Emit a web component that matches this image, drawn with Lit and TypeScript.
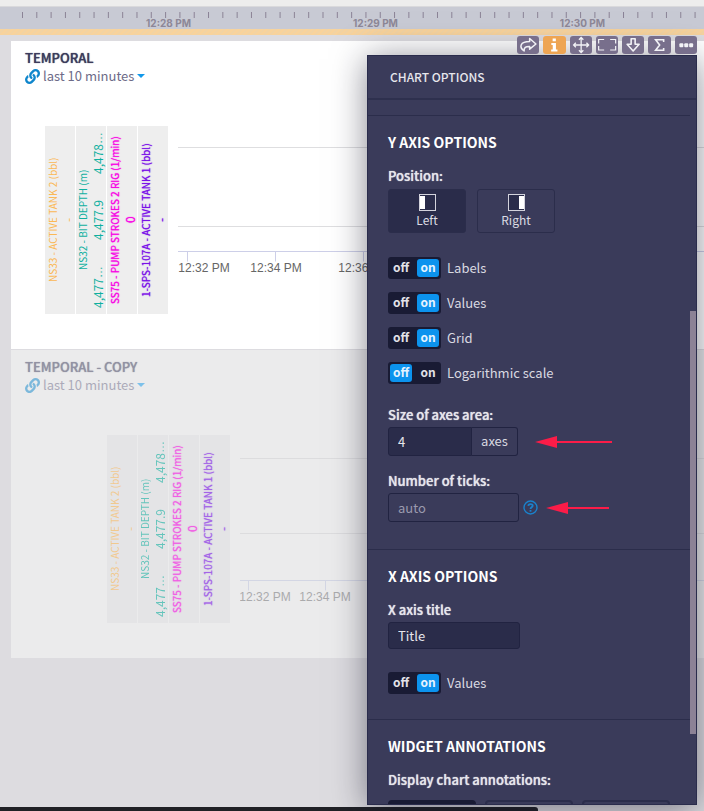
import { LitElement, html, svg, css } from "lit";
import { customElement } from "lit/decorators.js";
import { classMap } from "lit/directives/class-map.js";

const sans = css`"Noto Sans CJK JP", "Noto Sans", sans-serif`;

@customElement("time-ruler")
class TimeRuler extends LitElement {
  static styles = css`
    :host { display: block; font-family: Inter, sans-serif; }
    .ruler { background: #c8cad4; border-top: 1px solid #d9d9dc; height: 22px; overflow: hidden; }
    .ticks { display: block; width: 100%; height: 11px; }
    .ticks line { stroke: #8b8396; stroke-width: 1; }
    .labels { display: grid; grid-template-columns: repeat(3, 207px); padding-left: 65px; }
    .labels span { font-size: 10px; line-height: 10px; font-weight: 700; color: #8d8797; text-align: center; }
    .band { height: 6px; background: repeating-linear-gradient(135deg, #f9d39b 0 2px, #f3d3a2 2px 4px); }
  `;
  render() {
    const marks = Array.from({ length: 90 }, (_, i) => 22.5 + i * 14.31);
    return html`
      <div class="ruler">
        <svg class="ticks" aria-hidden="true">
          ${marks.map((x) => svg`<line x1=${x} x2=${x} y1="5" y2="11"></line>`)}
        </svg>
        <div class="labels"><span>12:28 PM</span><span>12:29 PM</span><span>12:30 PM</span></div>
      </div>
      <div class="band"></div>`;
  }
}

interface Axis { name: string; values: string[]; tone: string; strong?: boolean; }
const axes: Axis[] = [
  { name: "NS33 - ACTIVE TANK 2 (bbl)", values: ["-"], tone: "amber" },
  { name: "NS32 - BIT DEPTH (m)", values: ["4,477…", "4,477.9", "4,478…"], tone: "teal" },
  { name: "SS75 - PUMP STROKES 2 RIG (1/min)", values: ["0"], tone: "pink", strong: true },
  { name: "1-SPS-107A - ACTIVE TANK 1 (bbl)", values: ["-"], tone: "violet", strong: true },
];

interface Plot { grid: number[]; base: number; ticks: { x: number; label: number; text: string }[]; }

@customElement("trend-widget")
class TrendWidget extends LitElement {
  static properties = { heading: {}, plot: { attribute: false }, faded: { type: Boolean, reflect: true } };
  declare heading: string;
  declare plot: Plot;
  declare faded: boolean;
  static styles = css`
    :host { display: block; box-sizing: border-box; height: 308px; padding: 8px 0 0 14px; background: #fff; color: #3c3c5c; font-family: ${sans}; overflow: hidden; }
    :host([faded]) { background: #ebebec; }
    :host([faded]) .head { opacity: 0.5; }
    :host([faded]) .name, :host([faded]) .values { opacity: 0.6; }
    :host([faded]) .axis { background: #e4e4e6; }
    :host([faded]) .grid { stroke: #dcdcde; }
    :host([faded]) .base { stroke: #d3d6e4; }
    :host([faded]) text { fill: #aaaaac; }
    h2 { margin: 0; font-size: 13px; line-height: 18px; font-weight: 500; }
    .head h2 { text-shadow: 0 0 1px currentColor; }
    .range { display: flex; align-items: center; height: 18px; padding: 0; border: 0; background: none; font: 13px/18px ${sans}; color: #6d6b88; }
    .link { width: 15px; height: 15px; margin-right: 3px; }
    .caret { margin-left: 3px; border: 4px solid transparent; border-top-color: #1198ea; border-bottom: 0; }
    .chart { display: flex; gap: 10px; margin: 41px 0 0 20px; }
    .chart.shifted { margin-left: 82px; }
    .axes { display: flex; gap: 1px; flex: none; height: 188px; }
    .axis { display: flex; justify-content: center; box-sizing: border-box; width: 30px; padding: 6px 0; background: #eee; writing-mode: vertical-rl; transform: rotate(180deg); }
    .col { display: flex; flex-direction: column-reverse; width: 30px; height: 176px; }
    .name { font-size: 10px; line-height: 15px; text-align: center; white-space: nowrap; }
    .values { display: flex; justify-content: center; font-size: 12px; line-height: 15px; }
    .many { justify-content: space-between; }
    .dots { font-family: "Liberation Sans", sans-serif; }
    .amber { color: #fbb855; }
    .teal { color: #10b0a0; }
    .pink { color: #f808e4; }
    .violet { color: #7a10e8; }
    .strong { text-shadow: 0 0 1px currentColor; }
    .plot { flex: 1; min-width: 0; height: 188px; }
    .grid { stroke: #dedee0; }
    .base { stroke: #cdcfe8; }
    .plot text { font: 12px "Liberation Sans", sans-serif; fill: #666; text-anchor: middle; }
  `;
  private value(v: string) {
    return v.endsWith("…") ? html`<span>${v.slice(0, -1)}<span class="dots">…</span></span>` : html`<span>${v}</span>`;
  }
  render() {
    const p = this.plot;
    return html`
      <div class="head">
        <h2>${this.heading}</h2>
        <button class="range">
          <svg class="link" viewBox="0 0 512 512" aria-hidden="true"><path fill="#0f86cc" d="M326.612 185.391c59.747 59.809 58.927 155.698.36 214.59-.11.12-.24.25-.36.37l-67.2 67.2c-59.27 59.27-155.699 59.262-214.96 0-59.27-59.26-59.27-155.7 0-214.96l37.106-37.106c9.84-9.84 26.786-3.3 27.294 10.606.648 17.722 3.826 35.527 9.69 52.721 1.986 5.822.567 12.262-3.783 16.612l-13.087 13.087c-28.026 28.026-28.905 73.66-1.155 101.96 28.024 28.579 74.086 28.749 102.325.51l67.2-67.19c28.191-28.191 28.073-73.757 0-101.83-3.701-3.694-7.429-6.564-10.341-8.569a16.037 16.037 0 0 1-6.947-12.606c-.396-10.567 3.348-21.456 11.698-29.806l21.054-21.055c5.521-5.521 14.182-6.199 20.584-1.731a152.482 152.482 0 0 1 20.522 17.197zM467.547 44.449c-59.261-59.262-155.69-59.27-214.96 0l-67.2 67.2c-.12.12-.25.25-.36.37-58.566 58.892-59.387 154.781.36 214.59a152.454 152.454 0 0 0 20.521 17.196c6.402 4.468 15.064 3.789 20.584-1.731l21.054-21.055c8.35-8.35 12.094-19.239 11.698-29.806a16.037 16.037 0 0 0-6.947-12.606c-2.912-2.005-6.64-4.875-10.341-8.569-28.073-28.073-28.191-73.639 0-101.83l67.2-67.19c28.239-28.239 74.3-28.069 102.325.51 27.75 28.3 26.872 73.934-1.155 101.96l-13.087 13.087c-4.35 4.35-5.769 10.79-3.783 16.612 5.864 17.194 9.042 34.999 9.69 52.721.509 13.906 17.454 20.446 27.294 10.606l37.106-37.106c59.271-59.259 59.271-155.699.001-214.959z"/></svg>
          last 10 minutes<span class="caret"></span>
        </button>
      </div>
      <div class=${classMap({ chart: true, shifted: this.faded })}>
        <div class="axes">
          ${axes.map((a) => html`<div class="axis ${a.tone} ${a.strong ? "strong" : ""}">
            <div class="col">
              <div class=${classMap({ values: true, many: a.values.length > 1 })}>${a.values.map((v) => this.value(v))}</div>
              <div class="name">${a.name}</div>
            </div>
          </div>`)}
        </div>
        <svg class="plot">
          ${p.grid.map((y) => svg`<line class="grid" x1="0" x2="100%" y1=${y} y2=${y}></line>`)}
          <line class="base" x1="0" x2="100%" y1=${p.base} y2=${p.base}></line>
          ${p.ticks.map((t) => svg`<line class="base" x1=${t.x} x2=${t.x} y1=${p.base} y2=${p.base + 10}></line>
            <text x=${t.label} y=${p.base + 20}>${t.text}</text>`)}
        </svg>
      </div>`;
  }
}

@customElement("option-switch")
class OptionSwitch extends LitElement {
  static properties = { label: {}, on: { type: Boolean } };
  declare label: string;
  declare on: boolean;
  static styles = css`
    :host { display: block; }
    label { display: flex; align-items: center; gap: 6px; height: 22px; font: 13px/20px ${sans}; color: #d9d9e1; }
    input { position: absolute; opacity: 0; width: 53px; height: 22px; margin: 0; }
    .track { display: grid; grid-template-columns: 22px 22px; gap: 5px; box-sizing: border-box; width: 53px; height: 22px; padding: 2px; border-radius: 3px; background: #191b34; font-size: 12px; font-weight: 700; line-height: 16px; text-align: center; color: #e2e2e8; }
    .track span { border-radius: 3px; height: 18px; }
    .track .lit { background: #0c93ee; color: #e4f3ff; }
  `;
  render() {
    return html`<label>
      <input type="checkbox" role="switch" .checked=${this.on} @change=${(e: Event) => (this.on = (e.target as HTMLInputElement).checked)} />
      <span class="track" aria-hidden="true"><span class=${this.on ? "" : "lit"}>off</span><span class=${this.on ? "lit" : ""}>on</span></span>
      ${this.label}
    </label>`;
  }
}

@customElement("chart-options")
class ChartOptions extends LitElement {
  static properties = { side: { state: true } };
  declare side: string;
  constructor() { super(); this.side = "Left"; }
  static styles = css`
    :host { display: flex; flex-direction: column; box-sizing: border-box; border: 1px solid #2a2c4c; background: #3a3b5a; color: #e6e6ec; font: 13px/20px ${sans}; box-shadow: 0 4px 32px rgba(20, 20, 40, 0.5); overflow: hidden; }
    h2 { margin: 0; padding: 0 22px; font-size: 12px; line-height: 42px; font-weight: 500; border-bottom: 2px solid #2e304e; }
    .body { position: relative; flex: 1; min-height: 0; overflow: hidden; padding-top: 15px; }
    .thumb { position: absolute; right: 0; top: 30%; height: 60%; width: 6px; background: #8c8296; }
    section { border-top: 1px solid #2b2d4b; margin-right: 6px; padding: 16px 20px 25px; }
    h3 { margin: 0 0 14px; font-size: 14px; line-height: 20px; font-weight: 700; color: #fff; }
    .caption { display: block; font-weight: 500; text-shadow: 0 0 1px currentColor; }
    .choices { display: flex; gap: 11px; margin: 3px 0 24px; }
    .choice { display: flex; flex-direction: column; align-items: center; box-sizing: border-box; width: 78px; height: 44px; padding: 4px 0 0; border: 1px solid #2b2d4b; border-radius: 3px; background: none; color: #dcdce4; font: 12px/18px ${sans}; }
    .picked { background: #2a2c4a; }
    .choice svg { width: 17px; height: 17px; }
    .switches { display: flex; flex-direction: column; gap: 13px; margin-bottom: 21px; }
    .row { display: flex; align-items: center; margin: 2px 0 15px; }
    .last { margin-bottom: 2px; }
    .field { display: block; box-sizing: border-box; width: 131px; height: 29px; padding: 0 9px; border: 1px solid #212341; border-radius: 3px; background: #2a2c4a; color: #e6e6ec; font: 13px/20px ${sans}; }
    .plain { background: #3a3b5a; }
    .plain::placeholder { color: #9a9aae; opacity: 1; }
    .wide { width: 132px; height: 27px; margin: 2px 0 23px; }
    .joined { width: 84px; border-radius: 3px 0 0 3px; }
    .unit { box-sizing: border-box; width: 46px; height: 29px; border: 1px solid #212341; border-left: 0; border-radius: 0 3px 3px 0; line-height: 26px; text-align: center; color: #d9d9e1; }
    .help { display: block; width: 15px; height: 15px; margin-left: 4px; padding: 0; border: 0; background: none; }
    .help svg { display: block; width: 15px; height: 15px; }
    .arrow { display: block; height: 12px; margin-left: 17px; }
    .near { margin-left: 8px; }
    .notes { display: grid; grid-template-columns: repeat(3, 88px); gap: 9px; margin-top: 10px; }
    .note { height: 44px; border: 2px solid #2b2d4b; border-radius: 4px; background: none; }
    .noted { background: #191b34; border-color: #191b34; }
  `;
  private arrow(len: number, cls: string) {
    return html`<svg class="arrow ${cls}" width=${len} height="12" aria-hidden="true">
      <path fill="#fb1c48" d="M0 6 22 0V5H${len}V7H22V12Z"/></svg>`;
  }
  private choice(name: string, x: number) {
    return html`<button class=${classMap({ choice: true, picked: this.side === name })} aria-pressed=${this.side === name} @click=${() => (this.side = name)}>
      <svg viewBox="0 0 17 17" aria-hidden="true"><rect x="0.5" y="0.5" width="16" height="16" fill="#2a2c4a" stroke="#d3d3dc"/><rect x=${x} y="2" width="5" height="13" fill="#fff"/></svg>${name}</button>`;
  }
  render() {
    return html`
      <h2>CHART OPTIONS</h2>
      <div class="body">
        <section>
          <h3>Y AXIS OPTIONS</h3>
          <span class="caption">Position:</span>
          <div class="choices">${this.choice("Left", 1)}${this.choice("Right", 11)}</div>
          <div class="switches">
            <option-switch label="Labels" on></option-switch>
            <option-switch label="Values" on></option-switch>
            <option-switch label="Grid" on></option-switch>
            <option-switch label="Logarithmic scale"></option-switch>
          </div>
          <label class="caption" for="size">Size of axes area:</label>
          <div class="row"><input class="field joined" id="size" value="4" /><span class="unit">axes</span>${this.arrow(77, "")}</div>
          <label class="caption" for="count">Number of ticks:</label>
          <div class="row last"><input class="field plain" id="count" placeholder="auto" />
            <button class="help" aria-label="Help"><svg viewBox="0 0 15 15"><circle cx="7.5" cy="7.5" r="6.5" fill="none" stroke="#1a82cc" stroke-width="1.4"/><path d="M5.3 5.9C5.4 3.4 9.7 3.5 9.7 5.7 9.7 7.2 7.5 7.3 7.5 8.9" fill="none" stroke="#1a82cc" stroke-width="1.8"/><rect x="6.6" y="10" width="1.8" height="1.700" fill="#1a82cc"/></svg></button>
            ${this.arrow(63, "near")}</div>
        </section>
        <section>
          <h3>X AXIS OPTIONS</h3>
          <label class="caption" for="title">X axis title</label>
          <input class="field wide" id="title" value="Title" />
          <option-switch label="Values" on></option-switch>
        </section>
        <section>
          <h3>WIDGET ANNOTATIONS</h3>
          <span class="caption">Display chart annotations:</span>
          <div class="notes"><button class="note noted" aria-label="First display mode"></button><button class="note" aria-label="Second display mode"></button><button class="note" aria-label="Third display mode"></button></div>
        </section>
        <div class="thumb"></div>
      </div>`;
  }
}

const toolIcons = [
  { name: "Share", icon: svg`<path d="M12.5 2.5 18.8 8l-6.300 5.200V10.500C8.500 10.400 6.600 11.500 7 15 1.500 11 3 5.500 12.500 5.500Z" fill="none" stroke="#f2f2f6" stroke-width="1.500" stroke-linejoin="round"/>` },
  { name: "Information", icon: svg`<path d="M9.5 2.5h3.2v2.8H9.5zM8.2 7h4.600v6.500h1.500V15.500H8v-2h1.600V9H8.200z" fill="#fff"/>` },
  { name: "Move", icon: svg`<path d="M11 1.500v15M3.500 9h15M8.800 3.700 11 1.500l2.200 2.200M8.800 14.300 11 16.500l2.200-2.200M5.700 6.800 3.500 9l2.200 2.200M16.300 6.800 18.500 9l-2.200 2.200" fill="none" stroke="#f2f2f6" stroke-width="1.300"/>` },
  { name: "Full screen", icon: svg`<path d="M8 3.500H2.500v4M2.500 10v4H8M14 3.500h5.500v4M19.500 10v4H14" fill="none" stroke="#f2f2f6" stroke-width="1.200"/>` },
  { name: "Download", icon: svg`<path d="M9 2.800h4v5.500h4L11 15 5 8.300H9Z" fill="none" stroke="#f2f2f6" stroke-width="1.600" stroke-linejoin="round"/>` },
  { name: "Aggregate", icon: svg`<path d="M15.500 6V3.800H7.500L11.500 9 7.500 14.200h8V12" fill="none" stroke="#f2f2f6" stroke-width="1.600"/>` },
  { name: "More", icon: svg`<g fill="#f2f2f6"><rect x="4.200" y="7.200" width="4" height="4" rx="1"/><rect x="9.100" y="7.200" width="4" height="4" rx="1"/><rect x="14" y="7.200" width="4" height="4" rx="1"/></g>` },
];

@customElement("app-root")
class AppRoot extends LitElement {
  static styles = css`
    :host { display: block; position: relative; height: 100vh; min-height: 400px; overflow: hidden; background: #dddce0; font-family: ${sans}; }
    .top { height: 6px; background: #ededed; }
    .widgets { display: flex; flex-direction: column; gap: 1px; padding: 6px 0 0 11px; }
    .tools { position: absolute; top: 36px; right: 7px; width: 180px; display: grid; grid-template-columns: repeat(7, 1fr); gap: 4px; }
    .tool { height: 18px; padding: 0; border: 0; border-radius: 3px; background: #786f8c; }
    .tool svg { display: block; width: 100%; height: 18px; }
    .active { background: #eea553; }
    .panel { position: absolute; top: 55px; right: 7px; bottom: 6px; width: 330px; }
    .status { position: absolute; left: 0; bottom: 0; width: 538px; height: 4px; background: #202126; border-top-right-radius: 3px; }
  `;
  private first: Plot = { grid: [21.5, 100.5], base: 125.5, ticks: [
    { x: 9.5, label: 26, text: "12:32 PM" }, { x: 97.5, label: 98, text: "12:34 PM" }, { x: 185.5, label: 186, text: "12:36 PM" }] };
  private second: Plot = { grid: [23.5, 98.5], base: 145.5, ticks: [
    { x: 8.5, label: 25, text: "12:32 PM" }, { x: 85.5, label: 85, text: "12:34 PM" }] };
  render() {
    return html`
      <div class="top"></div>
      <time-ruler></time-ruler>
      <div class="widgets">
        <trend-widget heading="TEMPORAL" .plot=${this.first}></trend-widget>
        <trend-widget heading="TEMPORAL - COPY" .plot=${this.second} faded></trend-widget>
      </div>
      <div class="status"></div>
      <chart-options class="panel"></chart-options>
      <div class="tools">
        ${toolIcons.map((t) => html`<button class=${classMap({ tool: true, active: t.name === "Information" })} aria-label=${t.name}><svg viewBox="0 0 22 18">${t.icon}</svg></button>`)}
      </div>`;
  }
}
